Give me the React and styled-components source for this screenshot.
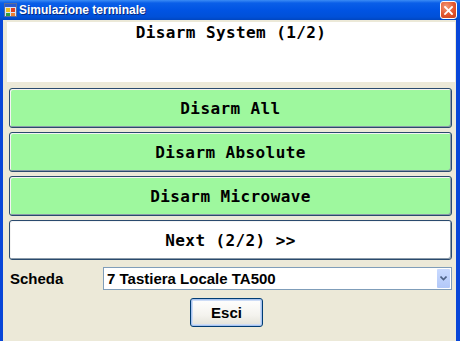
import React from "react";
import styled, { createGlobalStyle } from "styled-components";

const Global = createGlobalStyle`
  html, body { margin: 0; padding: 0; background: #ece9d8; }
  body { font-family: "Liberation Sans", Arial, sans-serif; }
`;

const Window = styled.div`
  width: 460px;
  height: 341px;
  display: flex;
  flex-direction: column;
  overflow: hidden;
  background: #ece9d8;
`;

const TitleBar = styled.div`
  height: 20px;
  flex: none;
  display: flex;
  align-items: center;
  padding: 0 3px 0 4px;
  gap: 2px;
  background: linear-gradient(to bottom, #3b8cf5 0%, #0a5fe8 15%, #0054e3 50%, #0050d8 85%, #0046c0 100%);
`;

const TitleText = styled.span`
  flex: 1;
  color: #fff;
  font-family: "Liberation Sans Narrow", "Liberation Sans", Arial, sans-serif;
  font-weight: bold;
  font-size: 12px;
  letter-spacing: 0;
  text-shadow: 1px 1px 0 #0a2a80;
`;

const CloseBtn = styled.div`
  width: 15px;
  height: 16px;
  border: 1px solid #fff;
  border-radius: 3px;
  background: radial-gradient(circle at 35% 30%, #f29b7a 0%, #e2552e 55%, #c4401e 100%);
  display: flex;
  align-items: center;
  justify-content: center;
`;

const Frame = styled.div`
  flex: 1;
  display: flex;
  border-left: 3px solid #0846d8;
  border-right: 4px solid #0846d8;
`;

const Client = styled.div`
  flex: 1;
  display: flex;
  flex-direction: column;
  padding: 2px 1px 0 4px;
  background: #ece9d8;
`;

const Display = styled.div`
  height: 60px;
  background: #fff;
  display: flex;
  justify-content: center;
  padding-top: 1px;
  box-sizing: border-box;
  font-family: "DejaVu Sans Mono", "Liberation Mono", monospace;
  font-weight: bold;
  font-size: 16px;
  letter-spacing: 0.4px;
  color: #000;
`;

const ButtonList = styled.div`
  display: flex;
  flex-direction: column;
  gap: 4px;
  margin: 6px 3px 0 2px;
`;

const BigButton = styled.div`
  height: 40px;
  box-sizing: border-box;
  border: 1px solid #2a4a6e;
  border-radius: 3px;
  box-shadow: inset 1px 1px 0 #f4f4f4, inset -1px -1px 0 #8a9aa8;
  background: ${(p) => (p.$green ? "#9ef89e" : "#ffffff")};
  display: flex;
  align-items: center;
  justify-content: center;
  font-family: "DejaVu Sans Mono", "Liberation Mono", monospace;
  font-weight: bold;
  font-size: 16px;
  letter-spacing: 0.4px;
  color: #000;
`;

const Row = styled.div`
  display: flex;
  align-items: center;
  margin: 7px 3px 0 3px;
  height: 23px;
`;

const Label = styled.span`
  width: 93px;
  font-weight: bold;
  font-size: 15px;
  color: #000;
`;

const Combo = styled.div`
  flex: 1;
  height: 23px;
  box-sizing: border-box;
  border: 1px solid #7f9db9;
  background: #fff;
  display: flex;
  align-items: center;
  padding: 1px 1px 1px 3px;
`;

const ComboText = styled.span`
  flex: 1;
  font-weight: bold;
  font-size: 15px;
  color: #000;
`;

const ComboArrow = styled.div`
  width: 13px;
  height: 19px;
  background: linear-gradient(to bottom, #c9daff, #b2c8f8);
  border-radius: 1px;
  display: flex;
  align-items: center;
  justify-content: center;
`;

const Footer = styled.div`
  display: flex;
  justify-content: center;
  margin-top: 8px;
  padding-right: 9px;
`;

const PushButton = styled.div`
  width: 73px;
  height: 29px;
  box-sizing: border-box;
  border: 1px solid #003c74;
  border-radius: 3px;
  background: linear-gradient(to bottom, #ffffff 0%, #f4f3ee 60%, #e3e1d7 100%);
  box-shadow: inset 0 0 0 1px #a7c3ef, inset 0 0 0 2px #cddcf6;
  display: flex;
  align-items: center;
  justify-content: center;
  font-weight: bold;
  font-size: 15px;
  color: #000;
`;

function AppIcon() {
  return (
    <svg width="13" height="14" viewBox="0 0 13 14">
      <rect x="0.5" y="0.5" width="12" height="13" fill="#d8e4f8" stroke="#5a6e9a" />
      <rect x="1" y="1" width="11" height="3" fill="#2a5bd0" />
      <rect x="2" y="5" width="4" height="4" fill="#f0c020" />
      <rect x="7" y="5" width="4" height="4" fill="#e04020" />
      <rect x="2" y="10" width="4" height="3" fill="#30a040" />
      <rect x="7" y="10" width="4" height="3" fill="#f08030" />
    </svg>
  );
}

export default function App() {
  return (
    <>
      <Global />
      <Window>
        <TitleBar>
          <AppIcon />
          <TitleText>Simulazione terminale</TitleText>
          <CloseBtn>
            <svg width="9" height="9" viewBox="0 0 9 9">
              <path d="M1 1 L8 8 M8 1 L1 8" stroke="#fff" strokeWidth="1.8" strokeLinecap="square" />
            </svg>
          </CloseBtn>
        </TitleBar>
        <Frame>
          <Client>
            <Display>Disarm System (1/2)</Display>
            <ButtonList>
              <BigButton $green>Disarm All</BigButton>
              <BigButton $green>Disarm Absolute</BigButton>
              <BigButton $green>Disarm Microwave</BigButton>
              <BigButton>Next (2/2) &gt;&gt;</BigButton>
            </ButtonList>
            <Row>
              <Label>Scheda</Label>
              <Combo>
                <ComboText>7 Tastiera Locale TA500</ComboText>
                <ComboArrow>
                  <svg width="7" height="5" viewBox="0 0 7 5">
                    <path d="M0.5 0.5 L3.5 3.5 L6.5 0.5" fill="none" stroke="#4d6185" strokeWidth="1.6" />
                  </svg>
                </ComboArrow>
              </Combo>
            </Row>
            <Footer>
              <PushButton>Esci</PushButton>
            </Footer>
          </Client>
        </Frame>
      </Window>
    </>
  );
}
